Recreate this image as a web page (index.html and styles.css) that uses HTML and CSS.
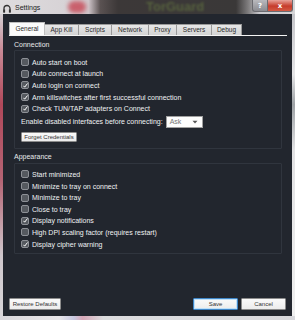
FILE: index.html
```html
<!DOCTYPE html>
<html>
<head>
<meta charset="utf-8">
<link rel="stylesheet" href="styles.css">
</head>
<body>
<div class="screen">
  <div class="titlebar">
    <svg class="appicon" width="8" height="9" viewBox="0 0 8 9"><path d="M1 8.5V4.5a3 3 0 0 1 6 0v4" fill="none" stroke="#333" stroke-width="1.3"/><rect x="0.3" y="5.5" width="1.8" height="3" fill="#333"/><rect x="5.9" y="5.5" width="1.8" height="3" fill="#333"/></svg>
    <span class="title">Settings</span>
    <span class="blob"></span>
    <span class="bgbrand">TorGuard</span>
    <div class="caption">
      <span class="cbtn help">?</span>
      <span class="cbtn close">x</span>
    </div>
  </div>
  <div class="frame">
    <div class="edge-left"></div>
    <div class="client">
      <div class="tabs">
        <span class="tab active">General</span>
        <span class="tab">App Kill</span>
        <span class="tab">Scripts</span>
        <span class="tab">Network</span>
        <span class="tab">Proxy</span>
        <span class="tab">Servers</span>
        <span class="tab">Debug</span>
      </div>
      <div class="tabline"></div>
      <div class="page">
        <div class="section-title first">Connection</div>
        <div class="group conn">
          <div class="row"><span class="cb"></span>Auto start on boot</div>
          <div class="row"><span class="cb"></span>Auto connect at launch</div>
          <div class="row"><span class="cb on"></span>Auto login on connect</div>
          <div class="row"><span class="cb on"></span>Arm killswitches after first successful connection</div>
          <div class="row"><span class="cb on"></span>Check TUN/TAP adapters on Connect</div>
          <div class="enable">Enable disabled interfaces before connecting: <span class="select">Ask<svg width="6" height="4" viewBox="0 0 6 4"><path d="M0.5 0.8h5L3 3.4z" fill="#555"/></svg></span></div>
          <button class="btn forget">Forget Credentials</button>
        </div>
        <div class="section-title second">Appearance</div>
        <div class="group appear">
          <div class="row"><span class="cb"></span>Start minimized</div>
          <div class="row"><span class="cb"></span>Minimize to tray on connect</div>
          <div class="row"><span class="cb"></span>Minimize to tray</div>
          <div class="row"><span class="cb"></span>Close to tray</div>
          <div class="row"><span class="cb on"></span>Display notifications</div>
          <div class="row"><span class="cb"></span>High DPI scaling factor (requires restart)</div>
          <div class="row"><span class="cb on"></span>Display cipher warning</div>
        </div>
      </div>
      <div class="footer">
        <button class="btn restore">Restore Defaults</button>
        <span class="spacer"></span>
        <button class="btn save">Save</button>
        <button class="btn cancel">Cancel</button>
      </div>
    </div>
    <div class="edge-right"></div>
  </div>
  <div class="bottom-edge"></div>
</div>
</body>
</html>
```

FILE: styles.css
```css
* { box-sizing: border-box; }
html, body { margin: 0; padding: 0; }
body {
  width: 295px;
  height: 320px;
  overflow: hidden;
  font-family: "Liberation Sans", Arial, sans-serif;
  font-size: 7px;
  background: #d9d6da;
}
.screen { width: 295px; height: 320px; display: flex; flex-direction: column; }

.titlebar {
  height: 14px;
  position: relative;
  display: flex;
  align-items: center;
  background: linear-gradient(90deg, #dedcde 0%, #d7d3d6 22%, #cfc6ca 30%, #5a5252 34%, #3c3838 40%, #3a3838 80%, #7d7b7c 84%, #c9c8cc 88%, #d6d6d8 100%);
  overflow: hidden;
}
.appicon { margin-left: 3px; margin-top: 2px; }
.title { margin-left: 4px; font-family: "Liberation Sans", sans-serif; font-size: 7px; color: #222; position: relative; z-index: 2; }
.blob {
  position: absolute; left: 68px; top: 1px; width: 18px; height: 12px;
  border-radius: 6px; background: #c9606c; filter: blur(2px);
}
.bgbrand {
  position: absolute; left: 146px; top: 0;
  font-family: "Liberation Sans", sans-serif; font-weight: bold; font-size: 13px; line-height: 13px;
  color: #56613e; filter: blur(1.2px);
}
.caption {
  position: absolute; right: 2px; top: 0;
  display: flex; gap: 0;
}
.cbtn {
  height: 12px; display: flex; align-items: center; justify-content: center;
  font-family: "DejaVu Sans", sans-serif; font-weight: bold; color: #fff;
  font-size: 7px;
  border: 1px solid #6b6b70; border-top: none;
}
.help { width: 15px; background: linear-gradient(#b9b9bd, #8b8b90); border-radius: 0 0 0 3px; border-right: none; }
.close { width: 26px; background: linear-gradient(#e7a39a, #c63c2c 55%, #d45a44); border-radius: 0 0 3px 0; }

.frame { flex: 1; display: flex; min-height: 0; }
.edge-left { width: 3px; background: linear-gradient(#d4cfd3 0%, #c98a96 12%, #b0485a 30%, #b46474 55%, #cfc7cc 80%, #d8d5d8 100%); }
.edge-right { width: 3px; background: linear-gradient(#c6c6ca 0%, #e6e6e8 20%, #9ea2a6 30%, #e2e2e4 45%, #f0f0f0 100%); }
.bottom-edge { height: 4px; background: linear-gradient(90deg, #d8d6da 0%, #e8e6ea 20%, #c8c8e0 25%, #d8a8b8 28%, #dcdcde 35%, #d8d8dc 100%); }

.client {
  width: 289px;
  background: #22262e;
  display: flex;
  flex-direction: column;
  color: #eceef0;
}

.tabs {
  display: flex;
  align-items: flex-end;
  margin: 8px 0 0 6px;
  height: 13px;
}
.tab {
  height: 11px;
  line-height: 10px;
  text-align: center;
  font-size: 6.5px;
  color: #2a2a2a;
  background: linear-gradient(#e6e6e6, #d4d4d4);
  border: 1px solid #9a9a9a;
  border-bottom: none;
  margin-left: -1px;
}
.tab:nth-child(1) { width: 36px; margin-left: 0; }
.tab:nth-child(2) { width: 35px; }
.tab:nth-child(3) { width: 34px; }
.tab:nth-child(4) { width: 38px; }
.tab:nth-child(5) { width: 29px; }
.tab:nth-child(6) { width: 36px; }
.tab:nth-child(7) { width: 31px; }
.tab.active { height: 13px; line-height: 12px; background: #fbfbfb; border-color: #bfbfbf; position: relative; z-index: 1; }
.tabline { height: 1px; background: #f4f4f4; margin: 0 5px 0 6px; }

.page { padding: 0 10px 0 11px; }
.section-title { height: 8px; line-height: 8px; color: #e8eaec; }
.section-title.first { margin-top: 5px; margin-bottom: 1px; }
.section-title.second { margin-top: 3.5px; margin-bottom: 2.5px; }

.group { border: 1px solid #30353e; border-radius: 1px; padding-left: 6px; }
.group.conn { height: 99px; padding-top: 5.5px; }
.group.appear { height: 91px; padding-top: 4.7px; }

.row {
  height: 11.6px;
  display: flex;
  align-items: center;
  color: #f0f2f4;
  white-space: nowrap;
}
.cb {
  width: 8px; height: 8px; margin-right: 3px;
  border: 1px solid #8d9096; border-radius: 2px;
  background: #55595f;
  flex: none;
  position: relative;
}
.cb.on::after {
  content: "";
  position: absolute; left: 1px; top: 0.5px; width: 5px; height: 5px;
  background: url("data:image/svg+xml;utf8,<svg xmlns='http://www.w3.org/2000/svg' viewBox='0 0 6 6'><path d='M0.6 3.4 L2 5 L5.4 0.6' fill='none' stroke='white' stroke-width='1.2'/></svg>") no-repeat center/contain;
}

.enable {
  height: 12px; margin-top: 1.5px;
  display: flex; align-items: center; white-space: nowrap;
  color: #f0f2f4;
}
.select {
  margin-left: 3px;
  width: 37px; height: 12px;
  background: #fdfdfd; border: 1px solid #a0a0a0;
  color: #777; display: flex; align-items: center; justify-content: space-between;
  padding: 0 4px 0 3px;
}
.btn {
  font-family: "Liberation Sans", sans-serif;
  font-size: 6px;
  color: #333;
  background: linear-gradient(#fafafa, #ececec);
  border: 1px solid #8c8c8c;
  border-radius: 1px;
  padding: 0;
  height: 11px;
  line-height: 9px;
  white-space: nowrap;
  text-align: center;
}
.forget { width: 56px; margin-top: 4.5px; display: block; height: 10px; line-height: 8px; }

.footer {
  margin-top: auto;
  margin-bottom: 6px;
  display: flex;
  align-items: center;
  padding: 0 6px 0 6px;
  height: 12px;
}
.spacer { flex: 1; }
.restore { width: 52px; height: 12px; }
.save { width: 45px; height: 12px; border-color: #3f86c8; box-shadow: inset 0 0 0 1px #bfe0f8; margin-right: 3px; }
.cancel { width: 45px; height: 12px; }
```
